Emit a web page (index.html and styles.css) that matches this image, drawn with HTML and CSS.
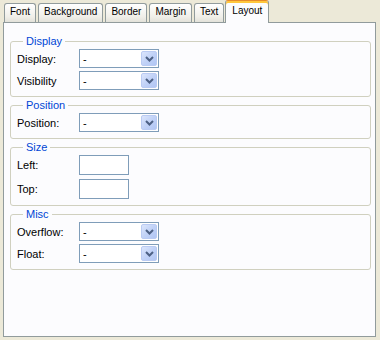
FILE: index.html
```html
<!DOCTYPE html>
<html lang="en">
<head>
    <meta charset="UTF-8">
    <title>Layout</title>
    <link rel="stylesheet" href="styles.css">
</head>
<body>
    <div class="window">
        <div class="tabs">
            <span class="tab">Font</span>
            <span class="tab">Background</span>
            <span class="tab">Border</span>
            <span class="tab">Margin</span>
            <span class="tab">Text</span>
            <span class="tab tab_active">Layout</span>
        </div>
        <div class="panel">
            <!-- Display -->
            <fieldset class="group">
                <legend>Display</legend>
                <div class="row">
                    <label class="row_label">Display:</label>
                    <div class="select"><span class="select_value">-</span><span class="select_btn"><svg width="9" height="6" viewBox="0 0 9 6"><polyline points="1,1 4.5,4.5 8,1" fill="none" stroke="#4d6185" stroke-width="2"/></svg></span></div>
                </div>
                <div class="row">
                    <label class="row_label">Visibility</label>
                    <div class="select"><span class="select_value">-</span><span class="select_btn"><svg width="9" height="6" viewBox="0 0 9 6"><polyline points="1,1 4.5,4.5 8,1" fill="none" stroke="#4d6185" stroke-width="2"/></svg></span></div>
                </div>
            </fieldset>
            <!-- Position -->
            <fieldset class="group">
                <legend>Position</legend>
                <div class="row">
                    <label class="row_label">Position:</label>
                    <div class="select"><span class="select_value">-</span><span class="select_btn"><svg width="9" height="6" viewBox="0 0 9 6"><polyline points="1,1 4.5,4.5 8,1" fill="none" stroke="#4d6185" stroke-width="2"/></svg></span></div>
                </div>
            </fieldset>
            <!-- Size -->
            <fieldset class="group group_size">
                <legend>Size</legend>
                <div class="row">
                    <label class="row_label">Left:</label>
                    <input class="text_input" type="text">
                </div>
                <div class="row">
                    <label class="row_label">Top:</label>
                    <input class="text_input" type="text">
                </div>
            </fieldset>
            <!-- Misc -->
            <fieldset class="group">
                <legend>Misc</legend>
                <div class="row">
                    <label class="row_label">Overflow:</label>
                    <div class="select"><span class="select_value">-</span><span class="select_btn"><svg width="9" height="6" viewBox="0 0 9 6"><polyline points="1,1 4.5,4.5 8,1" fill="none" stroke="#4d6185" stroke-width="2"/></svg></span></div>
                </div>
                <div class="row">
                    <label class="row_label">Float:</label>
                    <div class="select"><span class="select_value">-</span><span class="select_btn"><svg width="9" height="6" viewBox="0 0 9 6"><polyline points="1,1 4.5,4.5 8,1" fill="none" stroke="#4d6185" stroke-width="2"/></svg></span></div>
                </div>
            </fieldset>
        </div>
    </div>
</body>
</html>
```

FILE: styles.css
```css
html,body{
    padding:0;
    margin:0;
    width:100%;
    height:100%;
    background:#ECE9D8;
    font-family:"Liberation Sans", Arial, sans-serif;
    font-size:11px;
    color:#000;
}
.window{
    margin-left:3px;
    width:373px;
}
/* tabs */
.tabs{
    display:flex;
    align-items:flex-end;
    height:22px;
    padding-left:1px;
}
.tab{
    box-sizing:border-box;
    height:19px;
    margin-right:2px;
    padding:0 5px;
    font-size:10px;
    line-height:16px;
    border:1px solid #919B9C;
    border-bottom:none;
    border-radius:3px 3px 0 0;
    background:linear-gradient(#FFFFFF, #F0EFE9 70%, #E3E2DA);
    white-space:nowrap;
}
.tab.tab_active{
    position:relative;
    z-index:1;
    height:23px;
    margin:0 0 -1px -1px;
    padding:2px 6px 0 6px;
    border-top:1px solid #E68B2C;
    box-shadow:inset 0 2px 0 #FFC73C;
    background:#FCFCFE;
}
/* panel */
.panel{
    box-sizing:border-box;
    height:315px;
    padding:11px 4px 0 6px;
    border:1px solid #919B9C;
    background:#FCFCFE;
}
.group{
    margin:0 0 1px 0;
    padding:1px 6px 6px 6px;
    border:1px solid #D0D0BF;
    border-radius:3px;
}
.group legend{
    margin-left:6px;
    padding:0 3px;
    font-size:11px;
    line-height:14px;
    color:#0046D5;
}
.row{
    display:flex;
    align-items:center;
    height:19px;
}
.row + .row{
    margin-top:3px;
}
.group_size .row{
    height:20px;
}
.group_size .row + .row{
    margin-top:4px;
}
.row_label{
    width:62px;
}
/* combo box */
.select{
    box-sizing:border-box;
    display:flex;
    align-items:center;
    width:80px;
    height:19px;
    border:1px solid #7F9DB9;
    background:#FFFFFF;
}
.select_value{
    flex:1;
    padding-left:3px;
}
.select_btn{
    box-sizing:border-box;
    display:flex;
    align-items:center;
    justify-content:center;
    width:16px;
    height:15px;
    margin-right:1px;
    border:1px solid #BACBF3;
    border-radius:2px;
    background:linear-gradient(135deg, #DCE6FC, #C1D2F7 50%, #B1C6F4);
}
.text_input{
    box-sizing:border-box;
    width:50px;
    height:20px;
    margin:0;
    padding:0 2px;
    border:1px solid #7F9DB9;
    background:#FFFFFF;
    font:inherit;
}
```
